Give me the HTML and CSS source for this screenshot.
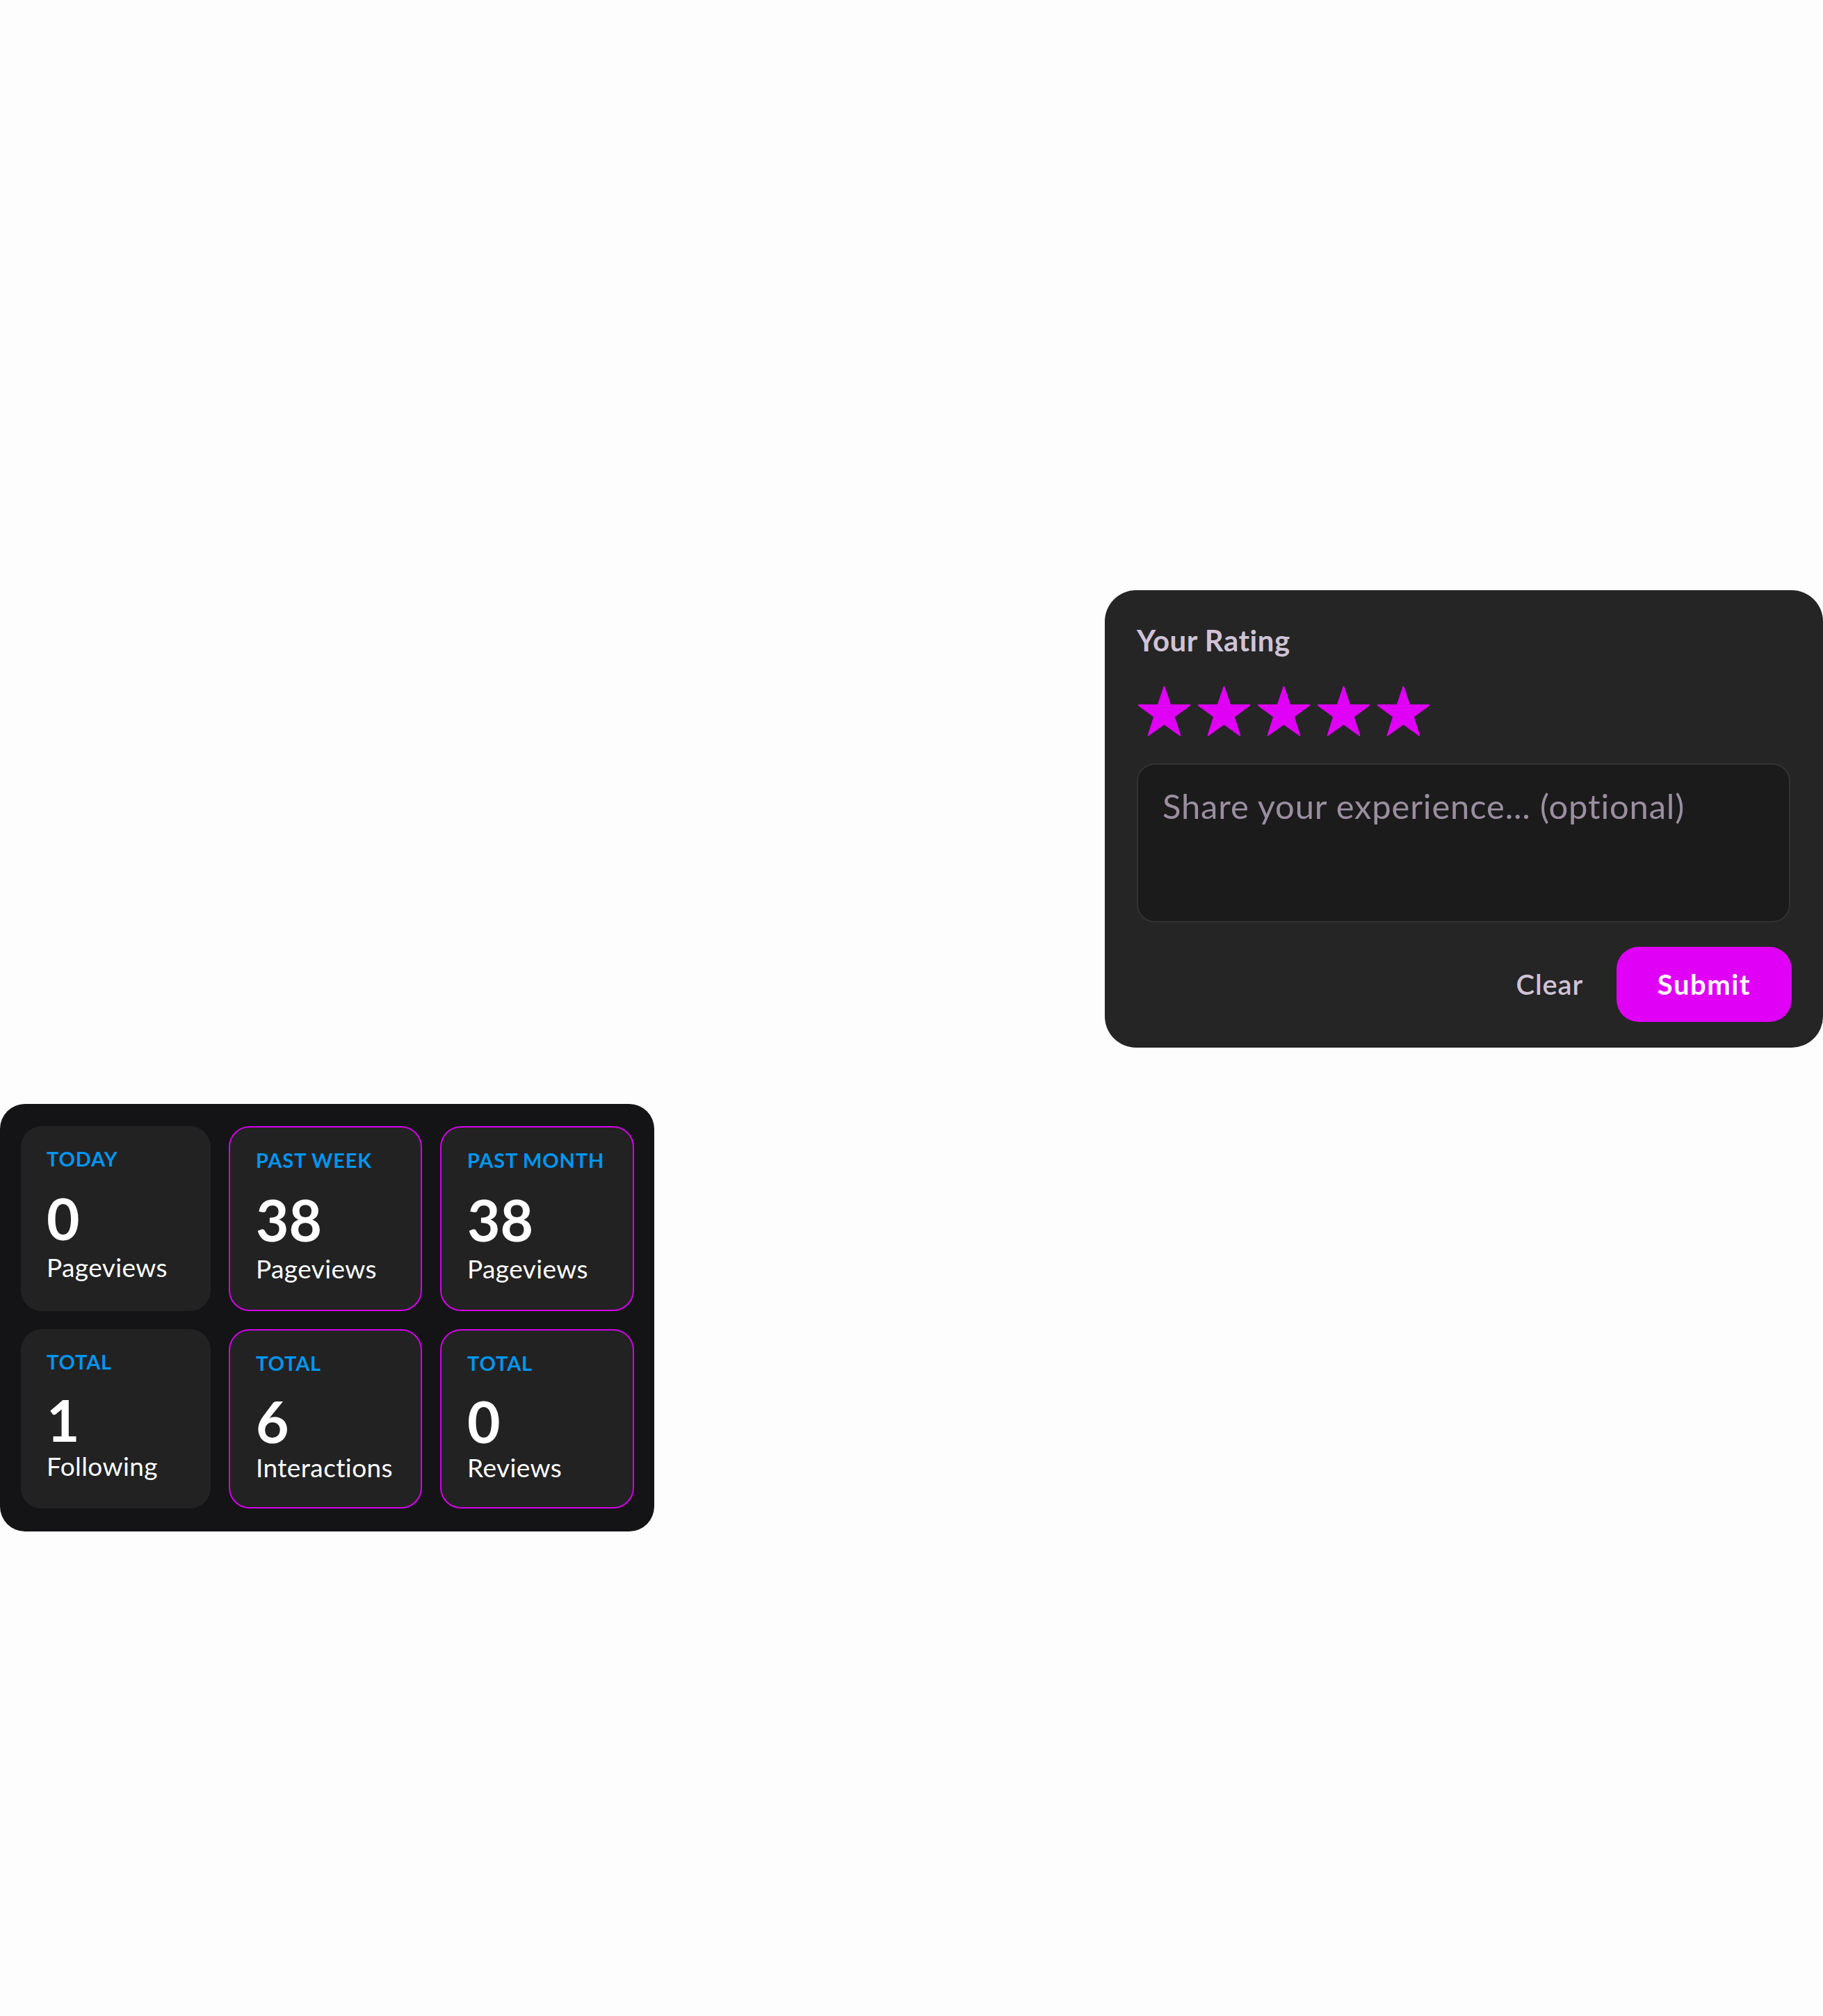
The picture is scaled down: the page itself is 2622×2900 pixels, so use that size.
FILE: index.html
```html
<!DOCTYPE html>
<html lang="en">
<head>
<meta charset="utf-8">
<title>Rating and stats</title>
<link rel="stylesheet" href="styles.css">
</head>
<body>
<main class="page">
  <section class="rating-card">
    <h2 class="rating-title">Your Rating</h2>
    <div class="stars">
      <svg class="star" viewBox="0 0 75 72" aria-hidden="true"><polygon points="37.5,1 46.35,27.22 74.5,27.23 51.81,44.05 60.3,70.8 37.5,54.45 14.7,70.8 23.19,44.05 0.5,27.23 28.65,27.22"/></svg>
      <svg class="star" viewBox="0 0 75 72" aria-hidden="true"><polygon points="37.5,1 46.35,27.22 74.5,27.23 51.81,44.05 60.3,70.8 37.5,54.45 14.7,70.8 23.19,44.05 0.5,27.23 28.65,27.22"/></svg>
      <svg class="star" viewBox="0 0 75 72" aria-hidden="true"><polygon points="37.5,1 46.35,27.22 74.5,27.23 51.81,44.05 60.3,70.8 37.5,54.45 14.7,70.8 23.19,44.05 0.5,27.23 28.65,27.22"/></svg>
      <svg class="star" viewBox="0 0 75 72" aria-hidden="true"><polygon points="37.5,1 46.35,27.22 74.5,27.23 51.81,44.05 60.3,70.8 37.5,54.45 14.7,70.8 23.19,44.05 0.5,27.23 28.65,27.22"/></svg>
      <svg class="star" viewBox="0 0 75 72" aria-hidden="true"><polygon points="37.5,1 46.35,27.22 74.5,27.23 51.81,44.05 60.3,70.8 37.5,54.45 14.7,70.8 23.19,44.05 0.5,27.23 28.65,27.22"/></svg>
    </div>
    <textarea class="rating-text" placeholder="Share your experience... (optional)"></textarea>
    <div class="rating-actions">
      <button class="btn-clear" type="button">Clear</button>
      <button class="btn-submit" type="button">Submit</button>
    </div>
  </section>

  <section class="stats-card">
    <div class="tile">
      <div class="tile-label">TODAY</div>
      <div class="tile-value">0</div>
      <div class="tile-sub">Pageviews</div>
    </div>
    <div class="tile tile--accent">
      <div class="tile-label">PAST WEEK</div>
      <div class="tile-value">38</div>
      <div class="tile-sub">Pageviews</div>
    </div>
    <div class="tile tile--accent">
      <div class="tile-label">PAST MONTH</div>
      <div class="tile-value">38</div>
      <div class="tile-sub">Pageviews</div>
    </div>
    <div class="tile tile--compact">
      <div class="tile-label">TOTAL</div>
      <div class="tile-value">1</div>
      <div class="tile-sub">Following</div>
    </div>
    <div class="tile tile--accent tile--compact">
      <div class="tile-label">TOTAL</div>
      <div class="tile-value">6</div>
      <div class="tile-sub">Interactions</div>
    </div>
    <div class="tile tile--accent tile--compact">
      <div class="tile-label">TOTAL</div>
      <div class="tile-value">0</div>
      <div class="tile-sub">Reviews</div>
    </div>
  </section>
</main>
</body>
</html>
```

FILE: styles.css
```css
* {
  box-sizing: border-box;
}

html, body {
  margin: 0;
  padding: 0;
  background: #fdfdfd;
}

body {
  font-family: "Lato", "Open Sans", "Liberation Sans", sans-serif;
  width: 2622px;
  min-height: 2900px;
  overflow: hidden;
}

.page {
  display: flex;
  flex-direction: column;
  padding-top: 849px;
}

/* ---------- Rating card ---------- */
.rating-card {
  align-self: flex-end;
  width: 1033px;
  height: 658px;
  background: #252525;
  border-radius: 45px;
  padding: 47px 47px 37px 46px;
  display: flex;
  flex-direction: column;
}

.rating-title {
  margin: 0;
  font-size: 42px;
  line-height: 50px;
  font-weight: 700;
  letter-spacing: 0.5px;
  color: #cfc3d6;
}

.stars {
  display: flex;
  gap: 11px;
  margin-top: 41px;
  padding-left: 2px;
}

.star {
  width: 75px;
  height: 72px;
  display: block;
  fill: #df00f5;
  stroke: #df00f5;
  stroke-width: 2;
  stroke-linejoin: round;
}

.rating-text {
  display: block;
  width: 100%;
  height: 229px;
  margin-top: 39px;
  background: #1b1b1b;
  border: 2px solid #323232;
  border-radius: 26px;
  padding: 30px 35px;
  font-family: inherit;
  font-size: 49px;
  line-height: 59px;
  letter-spacing: 0.8px;
  color: #e6dce9;
  resize: none;
  outline: none;
}

.rating-text::placeholder {
  color: #9a8ea0;
  opacity: 1;
}

.rating-actions {
  display: flex;
  justify-content: flex-end;
  align-items: center;
  gap: 48px;
  margin-top: 35px;
}

.btn-clear {
  background: none;
  border: 0;
  padding: 0;
  font-family: inherit;
  font-size: 40px;
  font-weight: 600;
  letter-spacing: 0.8px;
  color: #cfc3d6;
  line-height: 48px;
}

.btn-submit {
  width: 252px;
  height: 108px;
  margin-right: -2px;
  background: #df00f5;
  border: 0;
  border-radius: 32px;
  font-family: inherit;
  font-size: 40px;
  font-weight: 700;
  letter-spacing: 1.5px;
  color: #ffffff;
  padding: 0;
}

/* ---------- Stats card ---------- */
.stats-card {
  margin-top: 81px;
  width: 941px;
  background: #141416;
  border-radius: 36px;
  padding: 32px 29px 33px 30px;
  display: grid;
  grid-template-columns: 273px 278px 279px;
  gap: 26px;
}

.tile {
  background: #222222;
  border-radius: 30px;
  padding: 29px 18px 37px 37px;
  color: #ffffff;
}

.tile--accent {
  border: 2px solid #d400ea;
}

.tile-label {
  font-size: 29px;
  line-height: 35px;
  font-weight: 700;
  letter-spacing: 0.8px;
  color: #0096f0;
  white-space: nowrap;
}

.tile-value {
  margin-top: 27px;
  font-size: 82px;
  line-height: 82px;
  font-weight: 700;
}

.tile-sub {
  margin-top: 8px;
  font-size: 37px;
  line-height: 44px;
  font-weight: 400;
  letter-spacing: 0.4px;
  white-space: nowrap;
}

.tile--compact {
  padding-bottom: 35px;
}

.tile--compact .tile-value {
  margin-top: 25px;
}

.tile--compact .tile-sub {
  margin-top: 4px;
}
```
